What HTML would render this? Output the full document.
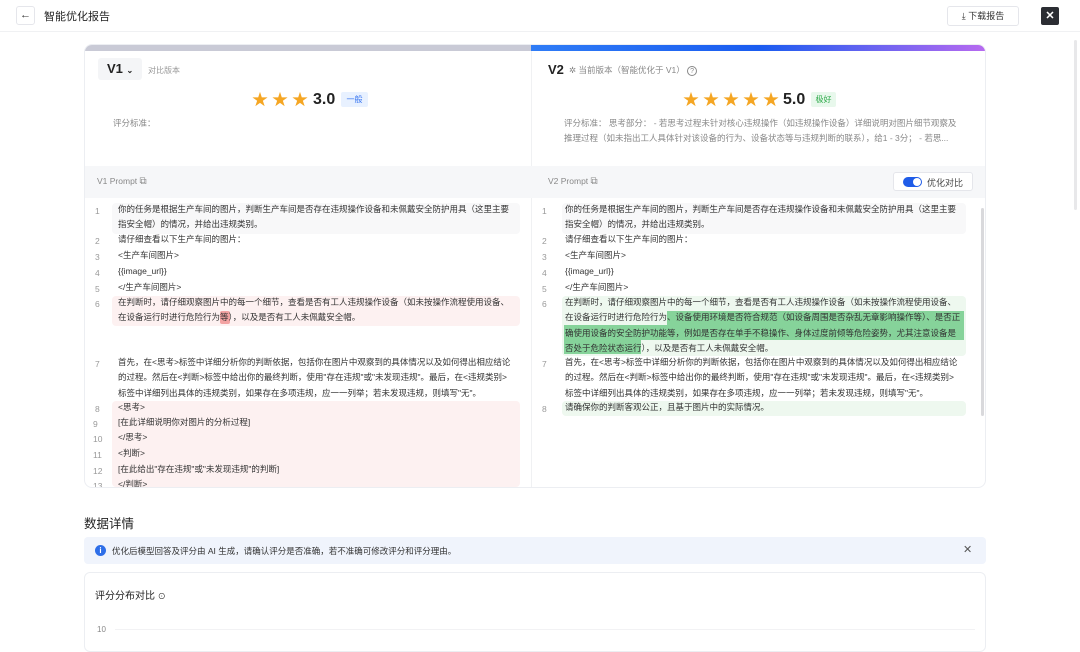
<!DOCTYPE html>
<html><head><meta charset="utf-8"><style>
*{margin:0;padding:0;box-sizing:border-box}
body{width:1080px;height:641px;overflow:hidden;background:#fff;font-family:"Liberation Sans","Noto Sans CJK SC",sans-serif;color:#333;position:relative}
.a{position:absolute;white-space:nowrap}
.ln{position:absolute;font-size:8.5px;color:#999;width:20px;text-align:left}
.tx{position:absolute;font-size:8.5px;color:#333;white-space:nowrap;line-height:15.3px}
.bgp{position:absolute;background:#fdf1f1;border-radius:4px}
.bgg{position:absolute;background:#eef8ef;border-radius:4px}
.st{position:absolute;color:#f5a623;font-size:16px;line-height:17px}
</style></head><body>
<div class="a" style="left:16px;top:6px;width:19px;height:19px;border:1px solid #e5e6eb;border-radius:3px;font-size:11px;text-align:center;line-height:17px;color:#333">←</div>
<div class="a" style="left:44px;top:8px;font-size:11px;color:#222">智能优化报告</div>
<div class="a" style="left:947px;top:6px;width:72px;height:20px;border:1px solid #e5e6eb;border-radius:3px;font-size:9px;line-height:18px;text-align:center;color:#333">⤓ 下载报告</div>
<div class="a" style="left:1041px;top:7px;width:18px;height:18px;background:#2b2d33;border-radius:2px;color:#fff;font-size:11px;font-weight:bold;text-align:center;line-height:18px">✕</div>
<div class="a" style="left:0;top:31px;width:1080px;height:1px;background:#f0f1f3"></div>
<div class="a" style="left:1074px;top:40px;width:3px;height:170px;background:#e8e8ea;border-radius:2px"></div>

<div class="a" style="left:84px;top:44px;width:902px;height:444px;border:1px solid #eceef2;border-radius:8px;overflow:hidden">
 <div class="a" style="left:0;top:0;width:446px;height:6px;background:#c9cad6"></div>
 <div class="a" style="left:446px;top:0;width:456px;height:6px;background:linear-gradient(90deg,#2f7cf6,#1a5cf0 50%,#b86af0)"></div>
 <div class="a" style="left:446px;top:6px;width:1px;height:440px;background:#f0f1f3"></div>
 <div class="a" style="left:0;top:121px;width:902px;height:32px;background:#f6f7f9"></div>
</div>

<div class="a" style="left:98px;top:58px;width:44px;height:22px;background:#f4f5f7;border-radius:3px;font-size:13px;font-weight:bold;line-height:22px;padding-left:9px;color:#222">V1 <span style="font-size:8px">⌄</span></div>
<div class="a" style="left:148px;top:65px;font-size:8px;color:#999">对比版本</div>
<div class="st" style="left:252px;top:92px">★</div><div class="st" style="left:272px;top:92px">★</div><div class="st" style="left:292px;top:92px">★</div>
<div class="a" style="left:313px;top:91px;font-size:16px;font-weight:bold;color:#222">3.0</div>
<div class="a" style="left:341px;top:92px;width:27px;height:15px;background:#e8f1ff;border-radius:2px;font-size:8px;color:#3573f0;text-align:center;line-height:15px">一般</div>
<div class="a" style="left:113px;top:117px;font-size:8.5px;color:#888">评分标准：</div>
<div class="a" style="left:97px;top:176px;font-size:8.5px;color:#888">V1 Prompt <span style="font-size:10px">⧉</span></div>

<div class="a" style="left:548px;top:62px;font-size:13px;font-weight:bold;color:#222">V2</div>
<div class="a" style="left:569px;top:64px;font-size:8.5px;color:#888">✲ 当前版本（智能优化于 V1）&nbsp;<span style="border:1px solid #888;border-radius:50%;display:inline-block;width:10px;height:10px;font-size:7px;text-align:center;line-height:9px">?</span></div>
<div class="st" style="left:683px;top:92px">★</div><div class="st" style="left:703px;top:92px">★</div><div class="st" style="left:723px;top:92px">★</div><div class="st" style="left:743px;top:92px">★</div><div class="st" style="left:763px;top:92px">★</div>
<div class="a" style="left:783px;top:91px;font-size:16px;font-weight:bold;color:#222">5.0</div>
<div class="a" style="left:811px;top:92px;width:25px;height:15px;background:#e8f8ec;border-radius:2px;font-size:8px;color:#2eaa4a;text-align:center;line-height:15px">极好</div>
<div class="a" style="left:564px;top:116px;font-size:8.5px;color:#888;line-height:15px">评分标准： 思考部分： - 若思考过程未针对核心违规操作（如违规操作设备）详细说明对图片细节观察及<br>推理过程（如未指出工人具体针对该设备的行为、设备状态等与违规判断的联系），给1 - 3分； - 若思...</div>
<div class="a" style="left:548px;top:176px;font-size:8.5px;color:#888">V2 Prompt <span style="font-size:10px">⧉</span></div>
<div class="a" style="left:893px;top:172px;width:80px;height:19px;border:1px solid #e5e6eb;border-radius:3px;background:#fff"></div>
<div class="a" style="left:903px;top:177px;width:19px;height:10px;background:#1f5ce8;border-radius:5px"><div style="position:absolute;right:1px;top:1px;width:8px;height:8px;border-radius:50%;background:#fff"></div></div>
<div class="a" style="left:927px;top:176px;font-size:9px;color:#444">优化对比</div>

<div class="bgp" style="left:112px;top:296px;width:408px;height:30px"></div>
<div class="bgp" style="left:112px;top:401px;width:408px;height:86px"></div>
<div class="a" style="left:220px;top:311px;width:10px;height:13px;background:#f3a3a3;border-radius:2px"></div>
<div class="a" style="left:112px;top:203px;width:408px;height:31px;background:#f8f8f9;border-radius:4px"></div>
<div class="a" style="left:84px;top:200px;width:446px;height:287px;overflow:hidden">
<div class="ln" style="left:11px;top:6px">1</div><div class="tx" style="left:34px;top:2px">你的任务是根据生产车间的图片，判断生产车间是否存在违规操作设备和未佩戴安全防护用具（这里主要<br>指安全帽）的情况，并给出违规类别。</div>
<div class="ln" style="left:11px;top:36px">2</div><div class="tx" style="left:34px;top:32px">请仔细查看以下生产车间的图片：</div>
<div class="ln" style="left:11px;top:52px">3</div><div class="tx" style="left:34px;top:48px">&lt;生产车间图片&gt;</div>
<div class="ln" style="left:11px;top:68px">4</div><div class="tx" style="left:34px;top:64px">{{image_url}}</div>
<div class="ln" style="left:11px;top:84px">5</div><div class="tx" style="left:34px;top:80px">&lt;/生产车间图片&gt;</div>
<div class="ln" style="left:11px;top:99px">6</div><div class="tx" style="left:34px;top:95px">在判断时，请仔细观察图片中的每一个细节，查看是否有工人违规操作设备（如未按操作流程使用设备、<br>在设备运行时进行危险行为等），以及是否有工人未佩戴安全帽。</div>
<div class="ln" style="left:11px;top:159px">7</div><div class="tx" style="left:34px;top:155px">首先，在&lt;思考&gt;标签中详细分析你的判断依据，包括你在图片中观察到的具体情况以及如何得出相应结论<br>的过程。然后在&lt;判断&gt;标签中给出你的最终判断，使用"存在违规"或"未发现违规"。最后，在&lt;违规类别&gt;<br>标签中详细列出具体的违规类别，如果存在多项违规，应一一列举；若未发现违规，则填写"无"。</div>
<div class="ln" style="left:11px;top:204px">8</div><div class="tx" style="left:34px;top:200px">&lt;思考&gt;</div>
<div class="ln" style="left:9px;top:219px">9</div><div class="tx" style="left:34px;top:215px">[在此详细说明你对图片的分析过程]</div>
<div class="ln" style="left:9px;top:234px">10</div><div class="tx" style="left:34px;top:230px">&lt;/思考&gt;</div>
<div class="ln" style="left:9px;top:250px">11</div><div class="tx" style="left:34px;top:246px">&lt;判断&gt;</div>
<div class="ln" style="left:9px;top:266px">12</div><div class="tx" style="left:34px;top:262px">[在此给出"存在违规"或"未发现违规"的判断]</div>
<div class="ln" style="left:9px;top:281px">13</div><div class="tx" style="left:34px;top:277px">&lt;/判断&gt;</div>
</div>

<div class="bgg" style="left:562px;top:296px;width:404px;height:60px"></div>
<div class="bgg" style="left:562px;top:401px;width:404px;height:15px"></div>
<div class="a" style="left:562px;top:203px;width:404px;height:31px;background:#f8f8f9;border-radius:4px"></div>
<div class="a" style="left:667px;top:311px;width:297px;height:14px;background:#86d39a"></div>
<div class="a" style="left:564px;top:325px;width:400px;height:15px;background:#86d39a"></div>
<div class="a" style="left:564px;top:340px;width:77px;height:14px;background:#86d39a"></div>
<div class="a" style="left:530px;top:200px;width:450px;height:230px;overflow:hidden">
<div class="ln" style="left:12px;top:6px">1</div><div class="tx" style="left:35px;top:2px">你的任务是根据生产车间的图片，判断生产车间是否存在违规操作设备和未佩戴安全防护用具（这里主要<br>指安全帽）的情况，并给出违规类别。</div>
<div class="ln" style="left:12px;top:36px">2</div><div class="tx" style="left:35px;top:32px">请仔细查看以下生产车间的图片：</div>
<div class="ln" style="left:12px;top:52px">3</div><div class="tx" style="left:35px;top:48px">&lt;生产车间图片&gt;</div>
<div class="ln" style="left:12px;top:68px">4</div><div class="tx" style="left:35px;top:64px">{{image_url}}</div>
<div class="ln" style="left:12px;top:84px">5</div><div class="tx" style="left:35px;top:80px">&lt;/生产车间图片&gt;</div>
<div class="ln" style="left:12px;top:99px">6</div><div class="tx" style="left:35px;top:95px">在判断时，请仔细观察图片中的每一个细节，查看是否有工人违规操作设备（如未按操作流程使用设备、<br>在设备运行时进行危险行为、设备使用环境是否符合规范（如设备周围是否杂乱无章影响操作等）、是否正<br>确使用设备的安全防护功能等，例如是否存在单手不稳操作、身体过度前倾等危险姿势，尤其注意设备是<br>否处于危险状态运行），以及是否有工人未佩戴安全帽。</div>
<div class="ln" style="left:12px;top:159px">7</div><div class="tx" style="left:35px;top:155px">首先，在&lt;思考&gt;标签中详细分析你的判断依据，包括你在图片中观察到的具体情况以及如何得出相应结论<br>的过程。然后在&lt;判断&gt;标签中给出你的最终判断，使用"存在违规"或"未发现违规"。最后，在&lt;违规类别&gt;<br>标签中详细列出具体的违规类别，如果存在多项违规，应一一列举；若未发现违规，则填写"无"。</div>
<div class="ln" style="left:12px;top:204px">8</div><div class="tx" style="left:35px;top:200px">请确保你的判断客观公正，且基于图片中的实际情况。</div>
</div>
<div class="a" style="left:981px;top:208px;width:3px;height:208px;background:#d9d9dc;border-radius:2px"></div>

<div class="a" style="left:84px;top:513px;font-size:12.5px;color:#222">数据详情</div>
<div class="a" style="left:84px;top:537px;width:902px;height:27px;background:#f0f4fc;border-radius:4px"></div>
<div class="a" style="left:95px;top:545px;width:11px;height:11px;border-radius:50%;background:#2e6ee8;color:#fff;font-size:8px;text-align:center;line-height:11px;font-weight:bold">i</div>
<div class="a" style="left:112px;top:545px;font-size:8.5px;color:#333">优化后模型回答及评分由 AI 生成，请确认评分是否准确，若不准确可修改评分和评分理由。</div>
<div class="a" style="left:963px;top:543px;font-size:11px;color:#555">✕</div>
<div class="a" style="left:84px;top:572px;width:902px;height:80px;border:1px solid #eceef2;border-radius:6px"></div>
<div class="a" style="left:95px;top:587px;font-size:10px;color:#222">评分分布对比 <span style="font-size:8px">⊙</span></div>
<div class="a" style="left:97px;top:625px;font-size:8px;color:#888">10</div>
<div class="a" style="left:115px;top:629px;width:860px;height:1px;background:#f2f2f4"></div>
</body></html>
